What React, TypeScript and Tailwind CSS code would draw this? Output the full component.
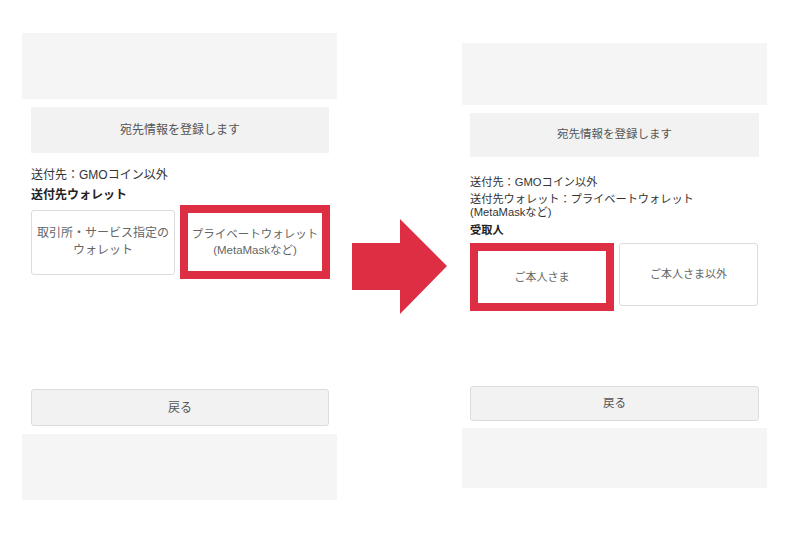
import React from "react";

const font = { fontFamily: '"Liberation Sans", "Noto Sans CJK JP", "Noto Sans", sans-serif' };

function LeftPanel() {
  return (
    <div className="w-[315px] mt-[33px] flex flex-col">
      <div className="h-[66px] bg-[#f5f5f5]" />
      <div className="pl-[9px] pr-[8px] flex flex-col">
        <div className="mt-[8px] h-[46px] bg-[#f2f2f2] flex items-center justify-center text-[12px] text-[#555]">
          宛先情報を登録します
        </div>
        <div className="mt-[14px] text-[12px] leading-[16px] text-[#333]">送付先：GMOコイン以外</div>
        <div className="mt-[4px] text-[12px] leading-[16px] font-bold text-[#222]">送付先ウォレット</div>
        <div className="mt-[2px] flex items-center gap-[5px]">
          <div className="w-[144px] h-[65px] border border-[#dcdcdc] rounded-[3px] bg-white flex items-center justify-center text-center text-[12px] leading-[17px] text-[#666]">
            取引所・サービス指定の
            <br />
            ウォレット
          </div>
          <div className="w-[150px] h-[74px] border-[8px] border-[#dd2e44] bg-white flex items-center justify-center text-center text-[11.5px] leading-[16px] text-[#666] -mr-[1px]">
            プライベートウォレット
            <br />
            (MetaMaskなど)
          </div>
        </div>
        <div className="mt-[110px] h-[37px] bg-[#f2f2f2] border border-[#dcdcdc] rounded-[3px] flex items-center justify-center text-[12px] text-[#555]">
          戻る
        </div>
      </div>
      <div className="mt-[8px] h-[66px] bg-[#f5f5f5]" />
    </div>
  );
}

function RightPanel() {
  return (
    <div className="w-[305px] mt-[43px] flex flex-col">
      <div className="h-[62px] bg-[#f5f5f5]" />
      <div className="px-[8px] flex flex-col">
        <div className="mt-[8px] h-[44px] bg-[#f2f2f2] flex items-center justify-center text-[11.5px] text-[#555]">
          宛先情報を登録します
        </div>
        <div className="mt-[18px] text-[11.2px] leading-[14px] text-[#333]">送付先：GMOコイン以外</div>
        <div className="mt-[4px] text-[11.2px] leading-[13px] text-[#333]">
          送付先ウォレット：プライベートウォレット
          <br />
          (MetaMaskなど)
        </div>
        <div className="mt-[4px] text-[11.2px] leading-[14px] font-bold text-[#222]">受取人</div>
        <div className="mt-[6px] flex items-start gap-[5px]">
          <div className="w-[144px] h-[68px] border-[8px] border-[#dd2e44] bg-white flex items-center justify-center text-[11px] text-[#666]">
            ご本人さま
          </div>
          <div className="w-[139px] h-[63px] border border-[#dcdcdc] rounded-[3px] bg-white flex items-center justify-center text-[11px] text-[#666]">
            ご本人さま以外
          </div>
        </div>
        <div className="mt-[75px] h-[35px] bg-[#f2f2f2] border border-[#dcdcdc] rounded-[3px] flex items-center justify-center text-[11.5px] text-[#555]">
          戻る
        </div>
      </div>
      <div className="mt-[7px] h-[60px] bg-[#f5f5f5]" />
    </div>
  );
}

export default function App() {
  return (
    <div className="w-[800px] h-[533px] bg-white flex items-start overflow-hidden" style={font}>
      <div className="ml-[22px]">
        <LeftPanel />
      </div>
      <div className="w-[125px] pt-[219px] pl-[15px]">
        <svg width="95" height="95" viewBox="0 0 95 95">
          <polygon points="0,24 48,24 48,0 95,47 48,95 48,71 0,71" fill="#dd2e44" />
        </svg>
      </div>
      <RightPanel />
    </div>
  );
}
